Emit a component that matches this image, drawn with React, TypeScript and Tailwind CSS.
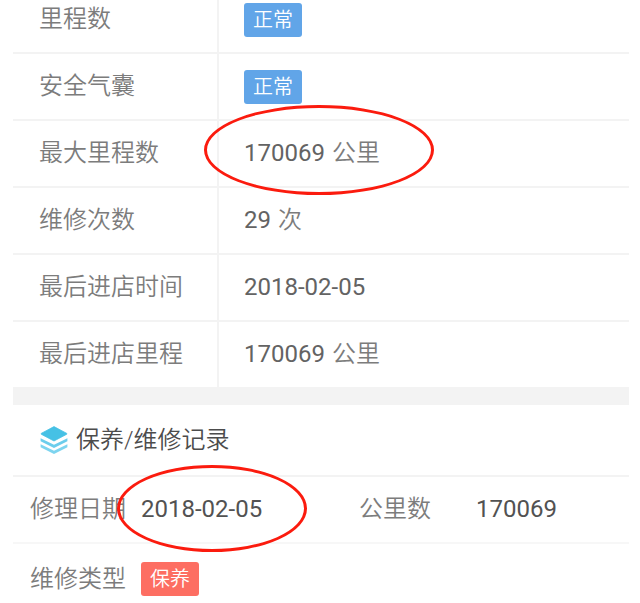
import React from 'react';

interface SummaryRow {
  label: string;
  value?: string;
  unit?: string;
  status?: string;
  marked?: boolean;
}

const SUMMARY_ROWS: SummaryRow[] = [
  { label: '里程数', status: '正常' },
  { label: '安全气囊', status: '正常' },
  { label: '最大里程数', value: '170069', unit: '公里', marked: true },
  { label: '维修次数', value: '29', unit: '次' },
  { label: '最后进店时间', value: '2018-02-05' },
  { label: '最后进店里程', value: '170069', unit: '公里' },
];

const Badge: React.FC<{ text: string; className: string }> = ({ text, className }) => (
  <span className={`inline-block rounded-[3px] px-[9px] text-[20px] leading-[34px] text-white ${className}`}>
    {text}
  </span>
);

const LayersIcon = () => (
  <svg viewBox="0 0 28 28" className="w-7 h-7 shrink-0" aria-hidden="true">
    <path d="M14 .6 26.8 7.4v.8L14 15 1.2 8.2v-.8Z" fill="#46c1e5" stroke="#46c1e5" strokeWidth=".8" strokeLinejoin="round" />
    <path d="M.6 12.2v3L14 22l13.4-6.8v-3L14 18.8Z" fill="#6ccdec" />
    <path d="M.6 18.2v3L14 28l13.4-6.8v-3L14 24.8Z" fill="#7dd4ef" />
  </svg>
);

const SummaryTable = () => (
  <div className="overflow-hidden">
    {/* scrolled a little, so the first row is cut at the top */}
    <table className="-mt-[13px] w-full table-fixed border-separate border-spacing-0">
      <tbody>
        {SUMMARY_ROWS.map(row => (
          <tr key={row.label} className="group">
            <th
              scope="row"
              className="w-[206px] border-b-2 border-r-2 border-[#f3f3f3] py-4 pl-[26px] text-left font-[350] text-[#7c7c7c] leading-[33px] group-last:border-b-0"
            >
              {row.label}
            </th>
            <td className="border-b-2 border-[#f3f3f3] pl-[25px] leading-[33px] group-last:border-b-0">
              {row.status ? (
                <Badge text={row.status} className="align-middle bg-[#61a5e8]" />
              ) : (
                <span className="relative">
                  <span className="font-normal text-[#636363]">{row.value}</span>
                  {row.unit && <span className="ml-[7px] text-[#7c7c7c]">{row.unit}</span>}
                  {row.marked && (
                    <span className="absolute -left-10 -top-[34px] h-[90px] w-[230px] rounded-[50%] border-3 border-[#fb1b0e]" />
                  )}
                </span>
              )}
            </td>
          </tr>
        ))}
      </tbody>
    </table>
  </div>
);

const RepairRecords = () => (
  <section>
    <h2 className="flex items-center gap-2 border-b-2 border-[#f3f3f3] py-[18px] pl-[27px] font-[350] leading-[34px] text-[#4c4c4c]">
      <LayersIcon />
      保养/维修记录
    </h2>
    <dl>
      <div className="flex border-b-2 border-[#f7f7f7] py-4 pl-[17px] leading-[33px]">
        <dt className="w-[111px] text-[#7c7c7c]">修理日期</dt>
        <dd className="relative w-[218px] font-normal text-[#525252]">
          2018-02-05
          <span className="absolute -left-6 -top-7 h-[87px] w-[190px] rounded-[50%] border-3 border-[#fb1b0e]" />
        </dd>
        <dt className="w-[117px] text-[#7c7c7c]">公里数</dt>
        <dd className="font-normal text-[#525252]">170069</dd>
      </div>
      <div className="flex items-center py-[18px] pl-[17px] leading-[34px]">
        <dt className="w-[111px] text-[#7c7c7c]">维修类型</dt>
        <dd className="flex">
          <Badge text="保养" className="bg-[#fd6e62]" />
        </dd>
      </div>
    </dl>
  </section>
);

const App: React.FC = () => (
  <main className="overflow-hidden bg-white pl-[13px] pr-[11px] text-[24px] font-[350] font-[Roboto,'Noto_Sans_CJK_SC',sans-serif]">
    <SummaryTable />
    <div className="h-[18px] bg-[#f3f3f3]" />
    <RepairRecords />
  </main>
);

export default App;
